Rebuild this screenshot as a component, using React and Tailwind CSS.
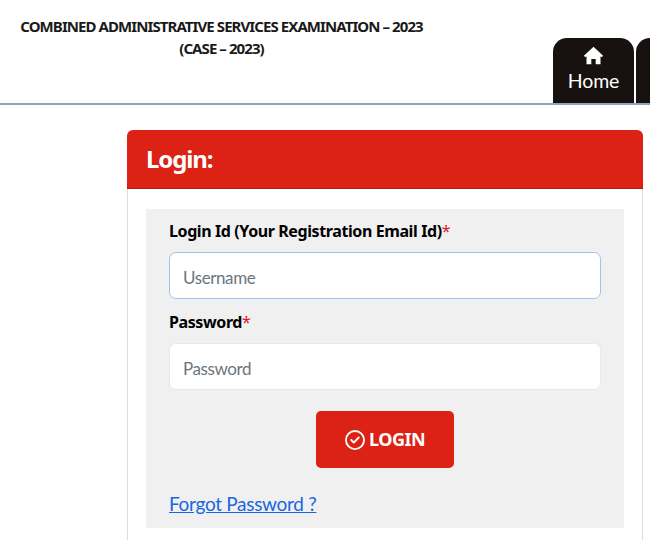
import { FaRegCircleCheck } from 'react-icons/fa6';

// bold text sits closer to Noto Sans, regular text to Lato
const bold = "font-['Noto_Sans',sans-serif] font-bold";
const regular = "font-['Lato',sans-serif]";

export default function App() {
  return (
    <div className="w-[650px] h-[540px] overflow-hidden bg-white text-black">
      {/* Header */}
      <header className="flex h-[105px] border-b-2 border-[#8fa3b8]">
        <div className={`${bold} w-[443px] shrink-0 pt-[15px] text-center text-[15px] leading-[22px] tracking-[-0.92px] text-[#1a1a1a]`}>
          <p>COMBINED ADMINISTRATIVE SERVICES EXAMINATION – 2023</p>
          <p>(CASE – 2023)</p>
        </div>
        <nav className="ml-[110px] flex gap-[2px] pt-[38px]">
          <a className="flex w-[81px] flex-col items-center rounded-t-[14px] bg-[#17120f] pt-[7px] text-white">
            <svg viewBox="0 0 24 24" className="h-[21px] w-[21px]" fill="currentColor">
              <path d="M12 2 1 12.2l1.7 1.8L4 12.8V22h5.5v-6h5v6H20v-9.2l1.3 1.2 1.7-1.8z" />
            </svg>
            <span className={`${regular} mt-[2px] text-[19.5px] leading-[26px] tracking-[-0.1px]`}>Home</span>
          </a>
          <a className="w-[60px] rounded-t-[14px] bg-[#17120f]" />
        </nav>
      </header>

      {/* Login card */}
      <main className="ml-[127px] mt-[25px] w-[516px] rounded-t-[6px] border border-[#dcdcdc] border-t-0">
        <div className="-mx-px flex h-[59px] items-center rounded-t-[6px] border-b border-[#b51d12] bg-[#dc2115] px-[19px]">
          <h1 className={`${bold} text-[24px] tracking-[-1.1px] text-white`}>Login:</h1>
        </div>
        <div className="px-[18px] pb-[40px] pt-[20px]">
          <form className="flex h-[319px] w-[478px] flex-col bg-[#f0f0f1] px-[23px]">
            <label className={`${bold} mt-[11px] text-[16px] leading-[22px] tracking-[-0.4px]`}>
              Login Id (Your Registration Email Id)<span className="font-normal text-[#e0141e]">*</span>
            </label>
            <input
              placeholder="Username"
              className={`${regular} mt-[10px] h-[47px] w-[432px] rounded-[7px] border border-[#a3c1ee] bg-white px-[13px] pt-[4px] text-[17px] tracking-[-0.4px] outline-none placeholder:text-[#6c757d]`}
            />
            <label className={`${bold} mt-[12px] text-[16px] leading-[22px] tracking-[-0.4px]`}>
              Password<span className="font-normal text-[#e0141e]">*</span>
            </label>
            <input
              placeholder="Password"
              className={`${regular} mt-[10px] h-[47px] w-[432px] rounded-[7px] border border-[#e9e9e9] bg-white px-[13px] pt-[4px] text-[17px] tracking-[-0.4px] outline-none placeholder:text-[#6c757d]`}
            />
            <button
              type="button"
              className={`${bold} mx-auto mt-[21px] flex h-[57px] w-[138px] items-center justify-center gap-[4px] rounded-[5px] bg-[#dc2115] text-[18px] tracking-[-0.5px] text-white`}
            >
              <FaRegCircleCheck className="text-[20px]" />
              LOGIN
            </button>
            <a className={`${regular} mt-[23px] text-[19px] leading-[26px] tracking-[-0.3px] text-[#1a66e0] underline`}>Forgot Password ?</a>
          </form>
        </div>
      </main>
    </div>
  );
}
